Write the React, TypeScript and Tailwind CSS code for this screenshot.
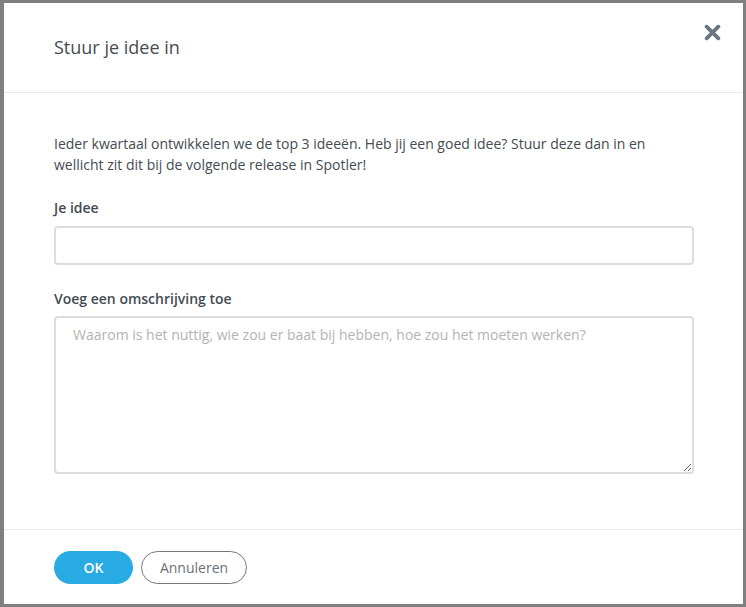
import { useState } from 'react';

export default function App() {
  const [idea, setIdea] = useState('');
  const [description, setDescription] = useState('');

  return (
    <div className="w-[746px] h-[607px] bg-[#808080] pt-[3px] pl-[4px] font-['Open_Sans',sans-serif]">
      <div className="relative w-[739px] h-[601px] bg-white flex flex-col">
        {/* header */}
        <div className="h-[90px] border-b border-[#e9e9e9] flex items-center pl-[50px]">
          <h1 className="text-[18px] text-[#464b52] pb-[1px]">Stuur je idee in</h1>
        </div>
        <button className="absolute right-[22px] top-[20px] w-[18px] h-[18px] flex items-center justify-center">
          <svg viewBox="0 0 16 16" className="w-[17px] h-[17px]">
            <path d="M2.5 2.5 L13.5 13.5 M13.5 2.5 L2.5 13.5" stroke="#6b7580" strokeWidth="3.6" strokeLinecap="round" />
          </svg>
        </button>

        {/* body */}
        <div className="flex-1 px-[50px] pt-[40px] text-[14px] text-[#444b52]">
          <p className="leading-[21px]">
            Ieder kwartaal ontwikkelen we de top 3 ideeën. Heb jij een goed idee? Stuur deze dan in en wellicht zit dit bij de volgende release in Spotler!
          </p>

          <label className="block mt-[23px] font-semibold leading-[20px]">Je idee</label>
          <input
            value={idea}
            onChange={(e) => setIdea(e.target.value)}
            className="mt-[8px] block w-[640px] h-[39px] border-2 border-[#dcdcdc] rounded-[4px] px-[16px] outline-none"
          />

          <label className="block mt-[24px] font-semibold leading-[20px]">Voeg een omschrijving toe</label>
          <textarea
            value={description}
            onChange={(e) => setDescription(e.target.value)}
            placeholder="Waarom is het nuttig, wie zou er baat bij hebben, hoe zou het moeten werken?"
            className="mt-[7px] block w-[640px] h-[158px] border-2 border-[#dcdcdc] rounded-[4px] px-[17px] py-[6px] leading-[21px] outline-none placeholder:text-[#b3b3b3]"
          />
        </div>

        {/* footer */}
        <div className="h-[75px] border-t border-[#e9e9e9] flex items-center gap-[8px] pl-[50px]">
          <button className="w-[79px] h-[33px] rounded-full bg-[#27abe2] text-white text-[14px] font-semibold">OK</button>
          <button className="w-[106px] h-[33px] rounded-full border border-[#777] text-[#6a7078] text-[14px]">Annuleren</button>
        </div>
      </div>
    </div>
  );
}
